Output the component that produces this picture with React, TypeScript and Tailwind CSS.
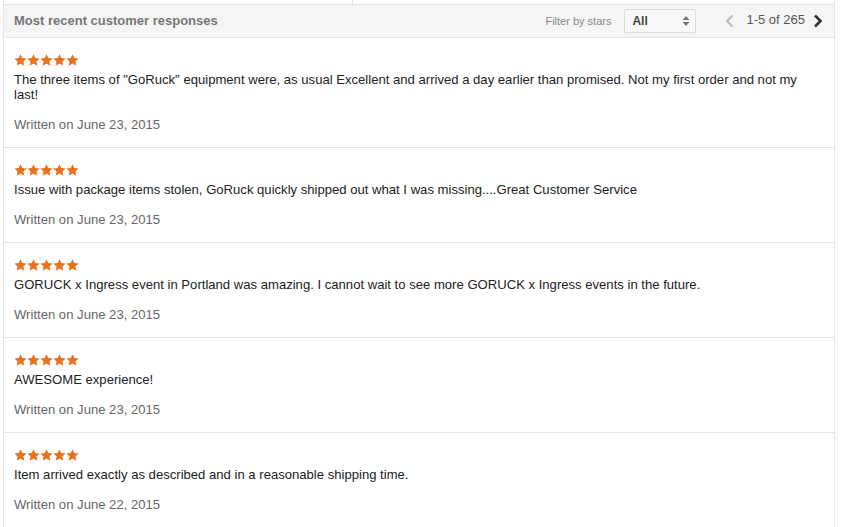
import React from "react";

const reviews = [
  {
    text: 'The three items of "GoRuck" equipment were, as usual Excellent and arrived a day earlier than promised. Not my first order and not my last!',
    date: "June 23, 2015",
  },
  {
    text: "Issue with package items stolen, GoRuck quickly shipped out what I was missing....Great Customer Service",
    date: "June 23, 2015",
  },
  {
    text: "GORUCK x Ingress event in Portland was amazing. I cannot wait to see more GORUCK x Ingress events in the future.",
    date: "June 23, 2015",
  },
  { text: "AWESOME experience!", date: "June 23, 2015" },
  {
    text: "Item arrived exactly as described and in a reasonable shipping time.",
    date: "June 22, 2015",
  },
];

function Star() {
  return (
    <svg width="13" height="12" viewBox="0 0 24 23" className="block">
      <path
        d="M12 0.3l3.4 7.4 8.3.9-6.1 5.6 1.7 8.1L12 18.2 4.7 22.3l1.7-8.1L.3 8.6l8.3-.9z"
        fill="#e8711c"
      />
    </svg>
  );
}

function Stars() {
  return (
    <div className="flex h-[12px]">
      <Star />
      <Star />
      <Star />
      <Star />
      <Star />
    </div>
  );
}

export default function App() {
  return (
    <div
      className="w-[841px] h-[527px] bg-white overflow-hidden"
      style={{ fontFamily: '"Liberation Sans", Arial, sans-serif' }}
    >
      <div className="ml-[3px] w-[832px] h-[4px] flex">
        <div className="w-[350px] border-l border-r border-[#e5e5e5]" />
        <div className="flex-1 border-r border-[#e5e5e5]" />
      </div>
      <div className="ml-[3px] w-[832px] border border-[#e5e5e5]">
        <div className="h-[33px] bg-[#f5f5f5] border-b border-[#e5e5e5] flex items-center pl-[10px] pr-[11px]">
          <div className="text-[13px] font-bold text-[#777] leading-[15px] -mt-[2px]">
            Most recent customer responses
          </div>
          <div className="ml-auto flex items-center">
            <span className="text-[11px] text-[#888] mr-[13px]">Filter by stars</span>
            <div className="w-[72px] h-[24px] border border-[#dcdcdc] bg-[#f8f8f8] rounded-[2px] flex items-center pl-[7px] pr-[5px]">
              <span className="text-[12px] font-bold text-[#444]">All</span>
              <svg width="8" height="12" viewBox="0 0 8 12" className="ml-auto">
                <path d="M4 1L7.5 5H0.5z" fill="#777" />
                <path d="M4 11L7.5 7H0.5z" fill="#777" />
              </svg>
            </div>
            <svg width="9" height="14" viewBox="0 0 9 14" className="ml-[29px]">
              <polyline points="7.5,1.5 2,7 7.5,12.5" fill="none" stroke="#bbb" strokeWidth="2" />
            </svg>
            <span className="ml-[12px] text-[13px] text-[#555] -mt-[2px]">1-5 of 265</span>
            <svg width="10" height="14" viewBox="0 0 10 14" className="ml-[8px]">
              <polyline points="2,1.5 7.5,7 2,12.5" fill="none" stroke="#333" strokeWidth="2.6" />
            </svg>
          </div>
        </div>
        {reviews.map((r, i) => (
          <div
            key={i}
            className={`pl-[10px] pr-[20px] pt-[16px] pb-[15px] ${i < reviews.length - 1 ? "border-b border-[#e5e5e5]" : ""}`}
          >
            <Stars />
            <p className="mt-[6px] text-[13.1px] leading-[15px] text-[#222]">{r.text}</p>
            <p className="mt-[15px] text-[13.1px] leading-[15px] text-[#666]">Written on {r.date}</p>
          </div>
        ))}
      </div>
    </div>
  );
}
